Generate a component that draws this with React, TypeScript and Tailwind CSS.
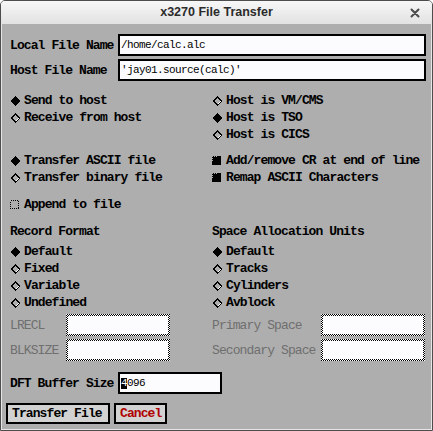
import type { ReactNode } from 'react';

const mono = { fontFamily: '"Liberation Mono", "DejaVu Sans Mono", monospace' };

function Diamond({ on }: { on: boolean }) {
  return (
    <svg width="10" height="10" viewBox="0 0 10 10" className="shrink-0" shapeRendering="crispEdges">
      {on ? (
        <polygon points="5,0 10,5 5,10 0,5" fill="#000" />
      ) : (
        <>
          <polygon points="5,0 10,5 5,10 0,5" fill="#000" />
          <polygon points="5,2 8,5 5,8 2,5" fill="#aeaeae" />
          <polygon points="8,5 5,8 6,8 9,5" fill="#fff" />
        </>
      )}
    </svg>
  );
}

function Check({ on }: { on: boolean }) {
  return (
    <svg width="9" height="9" viewBox="0 0 9 9" className="shrink-0" shapeRendering="crispEdges">
      {on ? (
        <>
          <rect x="0" y="0" width="9" height="9" fill="#000" />
          <rect x="0" y="0" width="1" height="1" fill="#aeaeae" />
          <rect x="2" y="0" width="1" height="1" fill="#aeaeae" />
          <rect x="4" y="0" width="1" height="1" fill="#aeaeae" />
          <rect x="0" y="2" width="1" height="1" fill="#aeaeae" />
          <rect x="0" y="4" width="1" height="1" fill="#aeaeae" />
        </>
      ) : (
        <rect x="0.5" y="0.5" width="8" height="8" fill="none" stroke="#000" strokeWidth="1" strokeDasharray="1 1" />
      )}
    </svg>
  );
}

function Radio({ on, children }: { on: boolean; children: ReactNode }) {
  return (
    <div className="flex items-center h-[17px]">
      <div className="w-[14px] flex items-center">
        <Diamond on={on} />
      </div>
      <span>{children}</span>
    </div>
  );
}

function Toggle({ on, children }: { on: boolean; children: ReactNode }) {
  return (
    <div className="flex items-center h-[17px]">
      <div className="w-[14px] flex items-center">
        <Check on={on} />
      </div>
      <span>{children}</span>
    </div>
  );
}

function Field({ value, className = '' }: { value?: ReactNode; className?: string }) {
  return (
    <div
      className={`h-[22px] border-2 border-black bg-[#fcfcff] flex items-center pl-[1px] text-[11px] tracking-[-0.6px] font-normal ${className}`}
      style={mono}
    >
      {value}
    </div>
  );
}

function DimField({ className = '' }: { className?: string }) {
  return (
    <div className={`h-[22px] p-[2px] bg-[repeating-conic-gradient(#000_0_25%,#fff_0_50%)] bg-[length:2px_2px] ${className}`}>
      <div className="w-full h-full bg-[#fcfcff]" />
    </div>
  );
}

export default function App() {
  return (
    <div className="w-[433px] h-[431px] flex flex-col bg-[#e6e6e6] border border-[#4d4d4d] rounded-t-[5px] overflow-hidden">
      {/* Title bar */}
      <div className="relative h-[23px] shrink-0 flex items-center justify-center bg-gradient-to-b from-[#f7f7f7] to-[#e2e2e2]">
        <span
          className="text-[12.5px] font-bold text-[#2b2b2b]"
          style={{ fontFamily: '"Liberation Sans", Arial, sans-serif' }}
        >
          x3270 File Transfer
        </span>
        <svg width="10" height="10" viewBox="0 0 10 10" className="absolute right-[12px] top-[7px]">
          <path d="M1.5 1.5 L8.5 8.5 M8.5 1.5 L1.5 8.5" stroke="#4a4a4a" strokeWidth="2" strokeLinecap="round" />
        </svg>
      </div>

      {/* Body */}
      <div
        className="flex-1 mx-[1px] mb-[1px] bg-[#aeaeae] pl-[8px] pr-[5px] pt-[10px] text-[13px] tracking-[-0.9px] font-bold text-black leading-none"
        style={mono}
      >
        <div className="flex items-center">
          <span className="w-[108px]">Local File Name</span>
          <Field value="/home/calc.alc" className="flex-1" />
        </div>
        <div className="flex items-center mt-[3px]">
          <span className="w-[108px]">Host File Name</span>
          <Field value="'jay01.source(calc)'" className="flex-1" />
        </div>

        <div className="grid grid-cols-[202px_1fr] mt-[11px]">
          <div>
            <Radio on>Send to host</Radio>
            <Radio on={false}>Receive from host</Radio>
          </div>
          <div>
            <Radio on={false}>Host is VM/CMS</Radio>
            <Radio on>Host is TSO</Radio>
            <Radio on={false}>Host is CICS</Radio>
          </div>
        </div>

        <div className="grid grid-cols-[202px_1fr] mt-[9px]">
          <div>
            <Radio on>Transfer ASCII file</Radio>
            <Radio on={false}>Transfer binary file</Radio>
          </div>
          <div>
            <Toggle on>Add/remove CR at end of line</Toggle>
            <Toggle on>Remap ASCII Characters</Toggle>
          </div>
        </div>

        <div className="mt-[10px]">
          <Toggle on={false}>Append to file</Toggle>
        </div>

        <div className="grid grid-cols-[202px_1fr] mt-[10px]">
          <div>
            <div className="h-[17px] flex items-center mb-[3px]">Record Format</div>
            <Radio on>Default</Radio>
            <Radio on={false}>Fixed</Radio>
            <Radio on={false}>Variable</Radio>
            <Radio on={false}>Undefined</Radio>
          </div>
          <div>
            <div className="h-[17px] flex items-center mb-[3px]">Space Allocation Units</div>
            <Radio on>Default</Radio>
            <Radio on={false}>Tracks</Radio>
            <Radio on={false}>Cylinders</Radio>
            <Radio on={false}>Avblock</Radio>
          </div>
        </div>

        <div className="grid grid-cols-[202px_1fr] mt-[3px] font-normal text-[#6f6f6f]">
          <div>
            <div className="flex items-center">
              <span className="w-[56px]">LRECL</span>
              <DimField className="w-[104px]" />
            </div>
            <div className="flex items-center mt-[3px]">
              <span className="w-[56px]">BLKSIZE</span>
              <DimField className="w-[104px]" />
            </div>
          </div>
          <div>
            <div className="flex items-center">
              <span className="w-[109px]">Primary Space</span>
              <DimField className="w-[104px]" />
            </div>
            <div className="flex items-center mt-[3px]">
              <span className="w-[109px]">Secondary Space</span>
              <DimField className="w-[104px]" />
            </div>
          </div>
        </div>

        <div className="flex items-center mt-[11px]">
          <span className="w-[108px]">DFT Buffer Size</span>
          <Field
            className="w-[104px]"
            value={
              <>
                <span className="bg-black text-white">4</span>
                <span>096</span>
              </>
            }
          />
        </div>

        <div className="flex gap-[4px] mt-[9px] -ml-[4px]">
          <button className="h-[21px] w-[104px] border-2 border-black bg-[#d2d2d2] flex items-center pl-[4px] font-bold text-black">
            Transfer File
          </button>
          <button className="h-[21px] w-[53px] border-2 border-black bg-[#d2d2d2] flex items-center pl-[4px] font-bold text-[#b00000]">
            Cancel
          </button>
        </div>
      </div>
    </div>
  );
}
